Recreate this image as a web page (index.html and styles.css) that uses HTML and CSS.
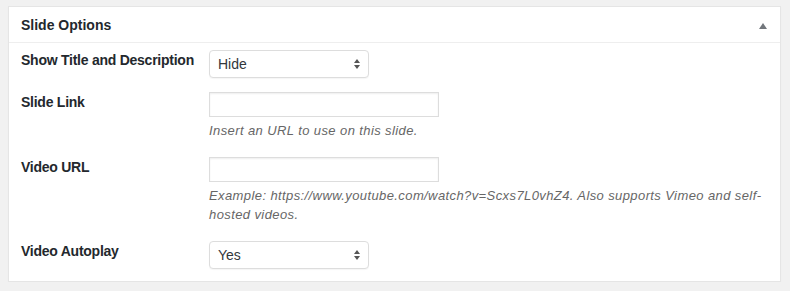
FILE: index.html
```html
<!DOCTYPE html>
<html lang="en">
  <head>
    <meta charset="utf-8" />
    <title>Slide Options</title>
    <link rel="stylesheet" href="styles.css">
  </head>
  <body>
    <div class="postbox">
      <div class="postbox-header">
        <h2>Slide Options</h2>
        <span class="toggle-arrow"></span>
      </div>

      <div class="inside">
        <div class="field-row">
          <label for="showTitle">Show Title and Description</label>
          <div class="field">
            <div class="select-wrap">
              <select id="showTitle">
                <option>Hide</option>
                <option>Show</option>
              </select>
            </div>
          </div>
        </div>

        <div class="field-row">
          <label for="slideLink">Slide Link</label>
          <div class="field">
            <input type="text" id="slideLink">
            <p class="description">Insert an URL to use on this slide.</p>
          </div>
        </div>

        <div class="field-row">
          <label for="videoUrl">Video URL</label>
          <div class="field">
            <input type="text" id="videoUrl">
            <p class="description">Example: https://www.youtube.com/watch?v=Scxs7L0vhZ4. Also supports Vimeo and self-hosted videos.</p>
          </div>
        </div>

        <div class="field-row">
          <label for="videoAutoplay">Video Autoplay</label>
          <div class="field">
            <div class="select-wrap">
              <select id="videoAutoplay">
                <option>Yes</option>
                <option>No</option>
              </select>
            </div>
          </div>
        </div>
      </div>
    </div>
  </body>
</html>
```

FILE: styles.css
```css
body {
  margin: 0;
  background: #f1f1f1;
  font-family: "Liberation Sans", Arial, sans-serif;
  color: #23282d;
}
/* Metabox card */
.postbox {
  margin: 6px 9px 0 8px;
  background: #fff;
  border: 1px solid #e5e5e5;
  box-shadow: 0 1px 1px rgba(0, 0, 0, 0.04);
}
.postbox-header {
  display: flex;
  align-items: center;
  justify-content: space-between;
  padding: 9px 13px 7px 12px;
  border-bottom: 1px solid #eee;
}
.postbox-header h2 {
  margin: 0;
  font-size: 14px;
  line-height: 19px;
  font-weight: bold;
  color: #23282d;
}
.toggle-arrow {
  width: 0;
  height: 0;
  border-left: 4px solid transparent;
  border-right: 4px solid transparent;
  border-bottom: 6px solid #72777c;
}
/* Form rows */
.inside {
  display: flex;
  flex-direction: column;
  gap: 14px;
  padding: 7px 12px 12px 12px;
}
.field-row {
  display: grid;
  grid-template-columns: 188px 1fr;
  align-items: start;
}
.field-row label {
  font-size: 14px;
  line-height: 20px;
  font-weight: bold;
  letter-spacing: -0.25px;
  color: #23282d;
}
.field {
  min-width: 0;
}
.field input[type="text"] {
  display: block;
  box-sizing: border-box;
  width: 230px;
  height: 25px;
  margin: 0;
  border: 1px solid #ddd;
  box-shadow: inset 0 1px 2px rgba(0, 0, 0, 0.07);
  background: #fff;
}
.description {
  margin: 4px 0 2px 0;
  font-size: 13px;
  line-height: 19.5px;
  font-style: italic;
  letter-spacing: 0.4px;
  color: #666;
}
/* Mac style select with double arrow */
.select-wrap {
  position: relative;
  width: 160px;
}
.select-wrap select {
  display: block;
  box-sizing: border-box;
  width: 160px;
  height: 28px;
  margin: 0;
  padding: 0 20px 0 8px;
  font-family: "Liberation Sans", Arial, sans-serif;
  font-size: 14px;
  color: #32373c;
  background: #fff;
  border: 1px solid #ddd;
  border-radius: 4px;
  box-shadow: 0 1px 1px rgba(0, 0, 0, 0.04);
  -webkit-appearance: none;
  appearance: none;
}
.select-wrap::before,
.select-wrap::after {
  content: "";
  position: absolute;
  right: 9px;
  width: 0;
  height: 0;
  border-left: 3px solid transparent;
  border-right: 3px solid transparent;
  pointer-events: none;
}
.select-wrap::before {
  top: 9px;
  border-bottom: 4px solid #555;
}
.select-wrap::after {
  top: 15px;
  border-top: 4px solid #555;
}
```
